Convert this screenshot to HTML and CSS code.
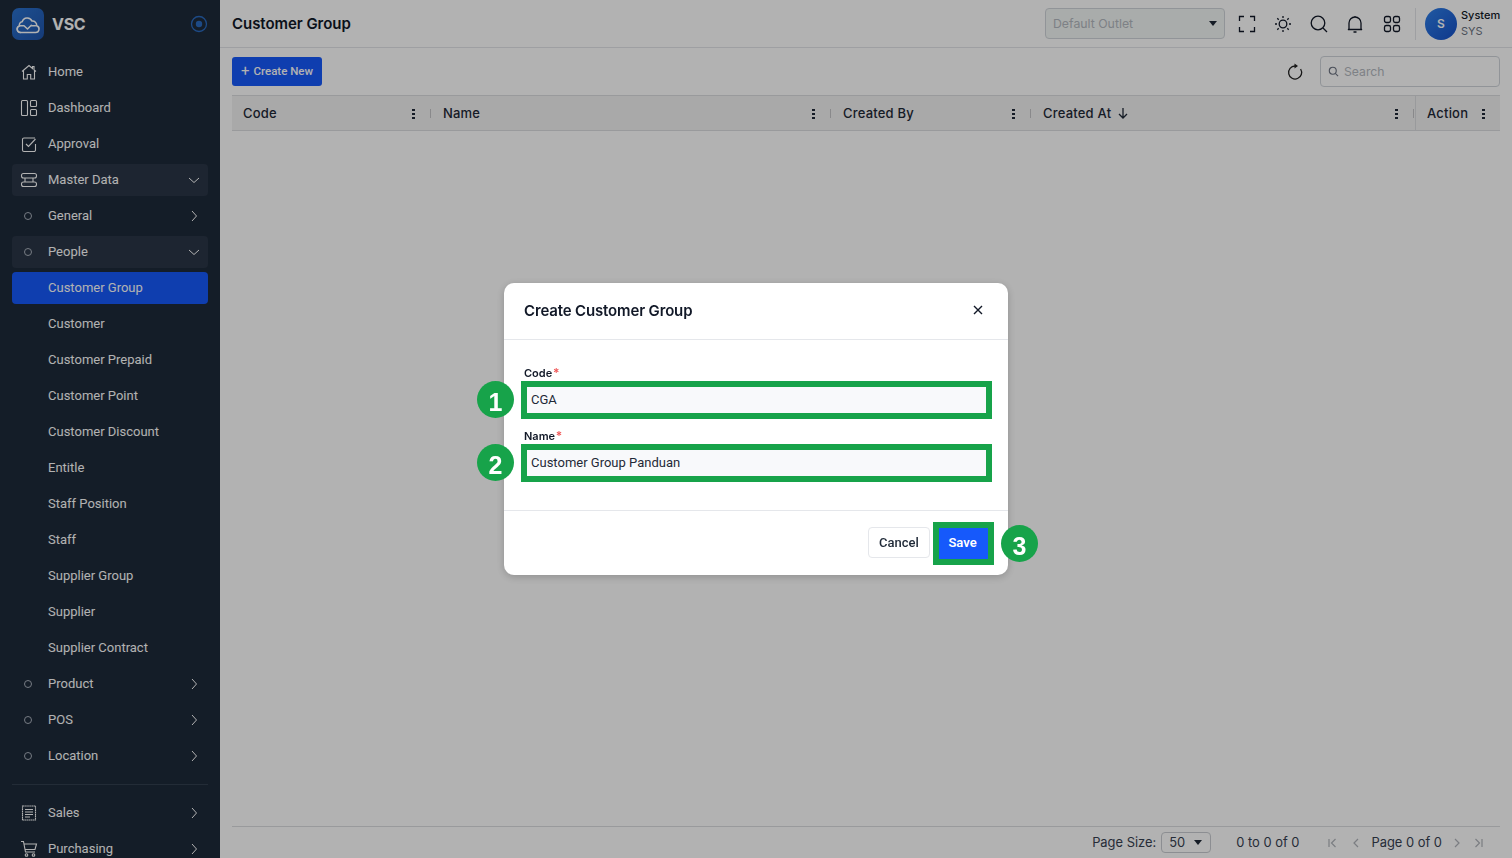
FILE: index.html
```html
<!DOCTYPE html>
<html lang="en">
<head>
    <meta charset="UTF-8">
    <title>Customer Group - VSC</title>
    <link rel="stylesheet" href="styles.css">
</head>
<body>
<div class="app">
    <aside class="sidebar">
        <div class="brand">
            <div class="brand-logo">
                <svg width="26" height="22" viewBox="0 0 26 22" fill="none" stroke="#fff" stroke-width="1.500" stroke-linecap="round" stroke-linejoin="round"><path d="M5.500 19.500h15a3.500 3.500 0 0 0 1.200-6.800 4.300 4.300 0 0 0-4.700-4.600 5.200 5.200 0 0 0-9.800.6 3.300 3.300 0 0 0-2.700 4.200 3.400 3.400 0 0 0 1 6.600z"/><path d="M5.500 19.500a3.400 3.400 0 0 1 0-6.800H9l3.500 3.300 3.800-3.800"/><path d="M16.500 12.700h4"/></svg>
            </div>
            <span class="brand-name">VSC</span>
            <svg class="brand-pin" width="18" height="18" viewBox="0 0 18 18" fill="none"><circle cx="9" cy="9" r="7.500" stroke="#2a6bc0" stroke-width="1.300"/><circle cx="9" cy="9" r="3.200" fill="#2a6bc0"/></svg>
        </div>
        <nav class="menu">
            <a class="menu-item">
                <svg class="menu-icon" viewBox="0 0 18 18"><path d="M2 8.500 9 2.500l3.500 3V3.500h1.500v3.300L16 8.500M3.500 7.500V16h3.800v-4.500h3.400V16h3.800V7.500"/></svg>
                <span class="menu-label">Home</span>
            </a>
            <a class="menu-item">
                <svg class="menu-icon" viewBox="0 0 18 18"><rect x="1.500" y="1.500" width="6" height="15" rx="1"/><rect x="10.500" y="1.500" width="6" height="6" rx="1"/><rect x="10.500" y="10.500" width="6" height="6" rx="1"/></svg>
                <span class="menu-label">Dashboard</span>
            </a>
            <a class="menu-item">
                <svg class="menu-icon" viewBox="0 0 18 18"><path d="M15 3H4a1.500 1.500 0 0 0-1.500 1.500v10.500A1.500 1.500 0 0 0 4 16.500h10a1.500 1.500 0 0 0 1.500-1.500V9"/><path d="m6 9 2.500 2.500L15.500 4"/></svg>
                <span class="menu-label">Approval</span>
            </a>
            <a class="menu-item menu-open">
                <svg class="menu-icon" viewBox="0 0 18 18"><rect x="1.500" y="2.500" width="15" height="4.500" rx="2"/><rect x="1.500" y="11" width="15" height="4.500" rx="2"/><path d="M5 7v4M13 7v4M4 4.700h.1M4 13.200h.1"/></svg>
                <span class="menu-label">Master Data</span>
                <svg class="chevron" viewBox="0 0 12 12"><path d="m1 4 5 4.500L11 4"/></svg>
            </a>
            <a class="menu-item">
                <span class="bullet"></span>
                <span class="menu-label">General</span>
                <svg class="chevron" viewBox="0 0 12 12"><path d="m4 1 4.500 5L4 11"/></svg>
            </a>
            <a class="menu-item menu-open">
                <span class="bullet"></span>
                <span class="menu-label">People</span>
                <svg class="chevron" viewBox="0 0 12 12"><path d="m1 4 5 4.500L11 4"/></svg>
            </a>
            <a class="menu-item menu-active"><span class="menu-label">Customer Group</span></a>
            <a class="menu-item menu-sub"><span class="menu-label">Customer</span></a>
            <a class="menu-item menu-sub"><span class="menu-label">Customer Prepaid</span></a>
            <a class="menu-item menu-sub"><span class="menu-label">Customer Point</span></a>
            <a class="menu-item menu-sub"><span class="menu-label">Customer Discount</span></a>
            <a class="menu-item menu-sub"><span class="menu-label">Entitle</span></a>
            <a class="menu-item menu-sub"><span class="menu-label">Staff Position</span></a>
            <a class="menu-item menu-sub"><span class="menu-label">Staff</span></a>
            <a class="menu-item menu-sub"><span class="menu-label">Supplier Group</span></a>
            <a class="menu-item menu-sub"><span class="menu-label">Supplier</span></a>
            <a class="menu-item menu-sub"><span class="menu-label">Supplier Contract</span></a>
            <a class="menu-item">
                <span class="bullet"></span>
                <span class="menu-label">Product</span>
                <svg class="chevron" viewBox="0 0 12 12"><path d="m4 1 4.500 5L4 11"/></svg>
            </a>
            <a class="menu-item">
                <span class="bullet"></span>
                <span class="menu-label">POS</span>
                <svg class="chevron" viewBox="0 0 12 12"><path d="m4 1 4.500 5L4 11"/></svg>
            </a>
            <a class="menu-item">
                <span class="bullet"></span>
                <span class="menu-label">Location</span>
                <svg class="chevron" viewBox="0 0 12 12"><path d="m4 1 4.500 5L4 11"/></svg>
            </a>
            <div class="menu-divider"></div>
            <a class="menu-item">
                <svg class="menu-icon" viewBox="0 0 18 18"><path d="M2.500 2h13v14h-13z" stroke-dasharray="1.500 .4"/><path d="M5 5.500h8M5 8h8M5 10.500h8M5 13h5"/></svg>
                <span class="menu-label">Sales</span>
                <svg class="chevron" viewBox="0 0 12 12"><path d="m4 1 4.500 5L4 11"/></svg>
            </a>
            <a class="menu-item">
                <svg class="menu-icon" viewBox="0 0 18 18"><path d="M1 1.500h2.500L5.500 12h9.500M4 4h12.500l-1.500 5.500H5"/><circle cx="6.500" cy="15" r="1.300"/><circle cx="13.500" cy="15" r="1.300"/></svg>
                <span class="menu-label">Purchasing</span>
                <svg class="chevron" viewBox="0 0 12 12"><path d="m4 1 4.500 5L4 11"/></svg>
            </a>
        </nav>
    </aside>

    <main class="main">
        <header class="topbar">
            <h1 class="page-title">Customer Group</h1>
            <div class="outlet-select">
                <span>Default Outlet</span>
                <span class="caret"></span>
            </div>
            <div class="top-icons">
                <svg class="top-icon" viewBox="0 0 20 20"><path d="M7 2.500H2.500V7M13 2.500h4.500V7M7 17.500H2.500V13M13 17.500h4.500V13"/></svg>
                <svg class="top-icon" viewBox="0 0 20 20"><circle cx="10" cy="10" r="3.800"/><path d="M10 2v2M10 16v2M2 10h2M16 10h2M4.300 4.300l1.400 1.400M14.300 14.300l1.400 1.400M4.300 15.700l1.400-1.400M14.300 5.700l1.400-1.400"/></svg>
                <svg class="top-icon" viewBox="0 0 20 20"><circle cx="9" cy="9" r="6.800"/><path d="m14 14 4 4"/></svg>
                <svg class="top-icon" viewBox="0 0 20 20"><path d="M4 15V9a6 6 0 0 1 12 0v6l1 .5H3zM10 3V2M8.500 18h3"/></svg>
                <svg class="top-icon" viewBox="0 0 20 20"><rect x="2.500" y="2.500" width="6" height="6" rx="1.800"/><rect x="11.500" y="2.500" width="6" height="6" rx="1.800"/><rect x="2.500" y="11.500" width="6" height="6" rx="1.800"/><rect x="11.500" y="11.500" width="6" height="6" rx="1.800"/></svg>
            </div>
            <div class="user">
                <div class="avatar">S</div>
                <div class="user-text">
                    <div class="user-name">System</div>
                    <div class="user-code">SYS</div>
                </div>
            </div>
        </header>

        <div class="content">
            <div class="toolbar">
                <button class="create-btn"><span class="plus">+</span> Create New</button>
                <svg class="refresh" viewBox="0 0 18 18"><path d="M9 3a6.500 6.500 0 1 0 5.600 3"/><path d="M8.500 .5v5L12 3z" fill="#222" stroke="none"/></svg>
                <div class="search">
                    <svg width="11" height="11" viewBox="0 0 12 12" fill="none" stroke="#6b7280" stroke-width="1.200"><circle cx="5.200" cy="5.200" r="3.800"/><path d="m8 8 3 3"/></svg>
                    <span>Search</span>
                </div>
            </div>

            <div class="table-head">
                <div class="th"><span>Code</span><span class="dots"></span><span class="sep"></span></div>
                <div class="th"><span>Name</span><span class="dots"></span><span class="sep"></span></div>
                <div class="th"><span>Created By</span><span class="dots"></span><span class="sep"></span></div>
                <div class="th">
                    <span>Created At</span>
                    <svg class="sort" viewBox="0 0 12 12"><path d="M6 1v10M2 7l4 4 4-4"/></svg>
                    <span class="dots"></span><span class="sep"></span>
                </div>
                <div class="th th-action"><span>Action</span><span class="dots"></span></div>
            </div>
            <div class="table-body"></div>

            <footer class="pager">
                <span>Page Size:</span>
                <div class="size-select"><span>50</span><span class="caret"></span></div>
                <span class="pager-count">0 to 0 of 0</span>
                <svg class="pager-icon first" viewBox="0 0 12 12"><path d="M3 2v8M9.500 2 5.500 6l4 4"/></svg>
                <svg class="pager-icon prev" viewBox="0 0 12 12"><path d="M8 2 4 6l4 4"/></svg>
                <span>Page 0 of 0</span>
                <svg class="pager-icon next" viewBox="0 0 12 12"><path d="m4 2 4 4-4 4"/></svg>
                <svg class="pager-icon last" viewBox="0 0 12 12"><path d="M9 2v8M2.500 2l4 4-4 4"/></svg>
            </footer>
        </div>
    </main>
</div>

<div class="overlay">
    <div class="modal">
        <div class="modal-head">
            <h2>Create Customer Group</h2>
            <svg class="modal-close" viewBox="0 0 12 12"><path d="m2 2 8 8M10 2l-8 8"/></svg>
        </div>
        <div class="modal-body">
            <label class="field-label">Code <span class="req">*</span></label>
            <div class="field marked">
                CGA
                <span class="step">1</span>
            </div>
            <label class="field-label">Name <span class="req">*</span></label>
            <div class="field marked">
                Customer Group Panduan
                <span class="step">2</span>
            </div>
        </div>
        <div class="modal-foot">
            <button class="btn-cancel">Cancel</button>
            <button class="btn-save marked">Save<span class="step step-save">3</span></button>
        </div>
    </div>
</div>
</body>
</html>
```

FILE: styles.css
```css
* {
    box-sizing: border-box;
}
body {
    margin: 0;
    height: 100vh;
    overflow: hidden;
    font-family: Inter, "Liberation Sans", sans-serif;
    color: #111827;
    background-color: #fff;
}
.app {
    display: flex;
    height: 858px;
}

/* Sidebar */
.sidebar {
    width: 220px;
    flex-shrink: 0;
    background-color: #1e2a3a;
    padding: 0 12px;
    overflow: hidden;
    font-family: Roboto, sans-serif;
    font-size: 13px;
    color: #fff;
}
.brand {
    display: flex;
    align-items: center;
    height: 48px;
}
.brand-logo {
    width: 32px;
    height: 32px;
    border-radius: 7px;
    background: linear-gradient(135deg, #2b72cf, #1f55ad);
    display: flex;
    align-items: center;
    justify-content: center;
}
.brand-name {
    margin-left: 8px;
    font-family: Inter, sans-serif;
    font-size: 16px;
    font-weight: 700;
    letter-spacing: -0.300px;
    flex: 1;
}
.menu {
    display: flex;
    flex-direction: column;
    gap: 4px;
    padding-top: 8px;
}
.menu-item {
    display: flex;
    align-items: center;
    height: 32px;
    flex-shrink: 0;
    padding: 0 8px;
    border-radius: 4px;
}
.menu-label {
    flex: 1;
    padding-bottom: 1px;
}
.menu-open {
    background-color: #2a3647;
}
.menu-active {
    background-color: #1659fb;
}
.menu-active,
.menu-sub {
    padding-left: 36px;
}
.menu-icon {
    width: 18px;
    height: 18px;
    margin-right: 10px;
    flex-shrink: 0;
    fill: none;
    stroke: #fff;
    stroke-width: 1.100;
}
.bullet {
    width: 8px;
    height: 8px;
    flex-shrink: 0;
    margin: 0 16px 0 4px;
    border: 1px solid #aab2bd;
    border-radius: 50%;
}
.chevron {
    width: 12px;
    height: 12px;
    fill: none;
    stroke: #fff;
    stroke-width: 1;
}
.menu-divider {
    height: 1px;
    flex-shrink: 0;
    margin: 8px 0;
    background-color: #333f50;
}

/* Main area */
.main {
    flex: 1;
    min-width: 0;
    display: flex;
    flex-direction: column;
}
.topbar {
    display: flex;
    align-items: center;
    height: 48px;
    padding: 0 12px;
    border-bottom: 1px solid #e2e4e8;
}
.page-title {
    flex: 1;
    margin: 0;
    font-size: 15px;
    font-weight: 600;
    letter-spacing: -0.050px;
}
.outlet-select {
    display: flex;
    align-items: center;
    justify-content: space-between;
    width: 180px;
    height: 31px;
    padding: 0 7px;
    border: 1px solid #d0d5da;
    border-radius: 4px;
    background-color: #f3f6f5;
    font-size: 12.300px;
    color: #b4b9c0;
}
.caret {
    width: 0;
    height: 0;
    border-left: 4px solid transparent;
    border-right: 4px solid transparent;
    border-top: 5px solid #1f2937;
}
.top-icons {
    display: flex;
    gap: 16px;
    margin-left: 12px;
}
.top-icon {
    width: 20px;
    height: 20px;
    fill: none;
    stroke: #111827;
    stroke-width: 1.300;
}
.top-icon:last-child {
    margin-left: 1px;
}
.user {
    display: flex;
    align-items: center;
    gap: 4px;
    height: 32px;
    margin-left: 13px;
    padding-left: 9px;
    border-left: 1px solid #e2e4e8;
}
.avatar {
    width: 32px;
    height: 32px;
    border-radius: 50%;
    background: linear-gradient(135deg, #2f80e8, #1650c8);
    color: #fff;
    font-size: 12px;
    font-weight: 600;
    display: flex;
    align-items: center;
    justify-content: center;
}
.user-text {
    width: 39px;
    font-size: 11px;
    line-height: 16px;
    white-space: nowrap;
    margin-top: -1px;
}
.user-name {
    font-weight: 500;
}
.user-code {
    color: #6b7280;
}
.content {
    flex: 1;
    display: flex;
    flex-direction: column;
    padding: 0 12px;
    min-height: 0;
}
.toolbar {
    display: flex;
    align-items: center;
    height: 47px;
}
.create-btn {
    display: flex;
    align-items: center;
    gap: 4px;
    width: 90px;
    height: 29px;
    padding: 0 0 1px 9px;
    border: none;
    border-radius: 3px;
    background-color: #1659fb;
    color: #fff;
    font-family: Roboto, sans-serif;
    font-size: 11.500px;
    font-weight: 500;
}
.plus {
    font-size: 15px;
    font-weight: 400;
    line-height: 1;
}
.refresh {
    width: 18px;
    height: 18px;
    margin-left: auto;
    margin-right: 16px;
    fill: none;
    stroke: #222;
    stroke-width: 1.300;
}
.search {
    display: flex;
    align-items: center;
    gap: 5px;
    width: 180px;
    height: 31px;
    padding-left: 7px;
    border: 1px solid #d0d5da;
    border-radius: 4px;
    font-size: 12.200px;
    color: #b4b9c0;
}
.table-head {
    display: grid;
    grid-template-columns: 200px 400px 200px 383px 85px;
    height: 36px;
    border-top: 1px solid #dcdde0;
    border-bottom: 1px solid #dcdde0;
    background-color: #f2f2f3;
    font-size: 13px;
    font-weight: 500;
    color: #1f2937;
    letter-spacing: 0.200px;
}
.th {
    display: flex;
    align-items: center;
    padding-left: 11px;
    position: relative;
}
.dots {
    width: 3px;
    height: 11px;
    margin-left: auto;
    margin-right: 15px;
    background-image: radial-gradient(circle, #1f2937 1.200px, transparent 1.400px);
    background-size: 3px 4px;
}
.sep {
    width: 1px;
    height: 9px;
    margin-right: 1px;
    background-color: #c4c5c8;
}
.sort {
    width: 12px;
    height: 12px;
    margin-left: 6px;
    fill: none;
    stroke: #1f2937;
    stroke-width: 1.300;
}
.th-action {
    border-left: 1px solid #dcdde0;
}
.table-body {
    flex: 1;
}
.pager {
    display: flex;
    align-items: center;
    justify-content: flex-end;
    height: 32px;
    padding-right: 15px;
    border-top: 1px solid #dcdde0;
    font-size: 12.900px;
    color: #374151;
}
.size-select {
    display: flex;
    align-items: center;
    justify-content: space-between;
    width: 50px;
    height: 21px;
    margin: 0 25px 0 5px;
    padding: 0 8px 0 7px;
    border: 1px solid #c9ccd1;
    border-radius: 4px;
}
.pager-count {
    margin-right: 27px;
}
.pager-icon {
    width: 12px;
    height: 12px;
    fill: none;
    stroke: #b0b4ba;
    stroke-width: 1.200;
}
.pager-icon.first {
    margin-right: 12px;
}
.pager-icon.prev {
    margin-right: 9px;
}
.pager-icon.next {
    margin-left: 9px;
}
.pager-icon.last {
    margin-left: 10px;
}

/* Modal and the guide marks on it */
.overlay {
    position: fixed;
    inset: 0;
    display: flex;
    align-items: center;
    justify-content: center;
    background-color: rgba(0, 0, 0, 0.3);
}
.modal {
    width: 504px;
    height: 292px;
    border-radius: 10px;
    background-color: #fff;
    box-shadow: 0 2px 8px rgba(0, 0, 0, 0.2);
}
.modal-head {
    display: flex;
    align-items: center;
    justify-content: space-between;
    height: 57px;
    padding: 0 24px 2px 20px;
    border-bottom: 1px solid #e5e7eb;
}
.modal-head h2 {
    margin: 0;
    font-size: 15px;
    font-weight: 600;
    letter-spacing: -0.150px;
}
.modal-close {
    width: 12px;
    height: 12px;
    fill: none;
    stroke: #111827;
    stroke-width: 1.400;
}
.modal-body {
    padding: 26px 19px 31px 20px;
    border-bottom: 1px solid #e5e7eb;
}
.field-label {
    display: block;
    height: 14px;
    margin-bottom: 4px;
    font-size: 11px;
    font-weight: 600;
    line-height: 14px;
}
.req {
    margin-left: -2px;
    font-size: 12px;
    color: #f05a5a;
}
.field {
    display: flex;
    align-items: center;
    height: 32px;
    margin-bottom: 13px;
    padding: 0 0 2px 7px;
    background-color: #f8f9fb;
    font-family: Roboto, sans-serif;
    font-size: 13px;
    color: #1f2937;
}
.field:last-child {
    margin-bottom: 0;
}
.marked {
    position: relative;
}
.marked::after {
    content: "";
    position: absolute;
    inset: -3px;
    border: 6px solid #17a34a;
}
.step {
    position: absolute;
    top: -3px;
    left: -47px;
    width: 37px;
    height: 37px;
    border-radius: 50%;
    background-color: #17a34a;
    color: #fff;
    font-family: "Liberation Sans", sans-serif;
    font-size: 25px;
    font-weight: 700;
    line-height: 42px;
    text-align: center;
}
.modal-foot {
    display: flex;
    justify-content: flex-end;
    align-items: flex-start;
    gap: 9px;
    padding: 16px 20px 0;
}
.btn-cancel,
.btn-save {
    height: 31px;
    border-radius: 4px;
    font-family: Roboto, sans-serif;
    font-size: 13px;
    font-weight: 500;
}
.btn-cancel {
    width: 62px;
    border: 1px solid #e5e7eb;
    background-color: #fff;
    color: #1f2937;
}
.btn-save {
    width: 49px;
    margin-top: 1px;
    padding: 0 2px 2px 0;
    border: none;
    border-radius: 0;
    background-color: #1659fb;
    color: #fff;
    font-weight: 600;
}
.btn-save::after {
    inset: -6px;
}
.step-save {
    top: -3px;
    left: 62px;
}
```
